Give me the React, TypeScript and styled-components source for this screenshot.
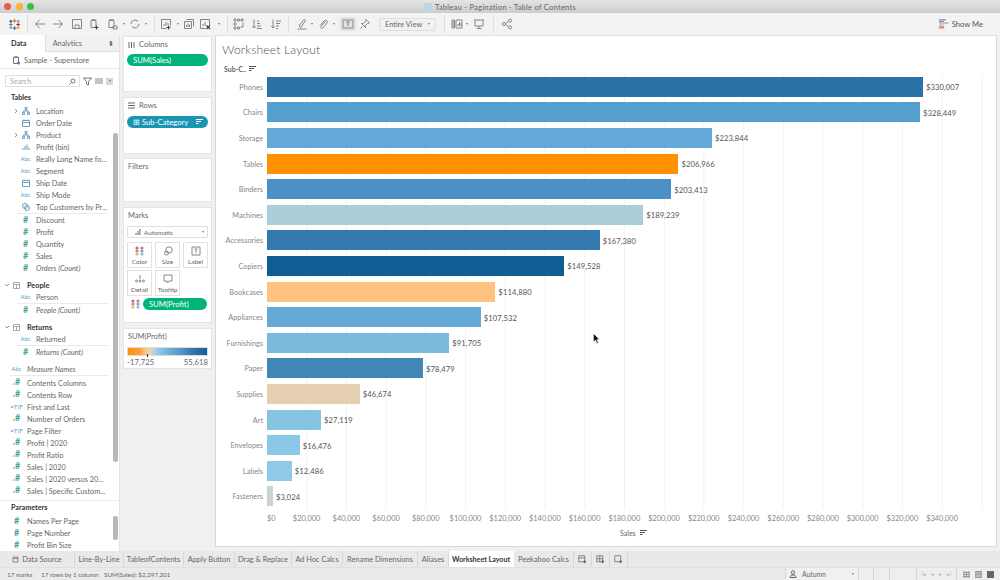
import React from "react";
import styled, { createGlobalStyle } from "styled-components";

const Global = createGlobalStyle`
  html, body { margin: 0; padding: 0; background: #f0f0f0; overflow: hidden; }
  * { box-sizing: border-box; }
  body { font-family: Lato, "Open Sans", "Liberation Sans", sans-serif; }
`;

const Page = styled.div`
  width: 1000px; height: 580px; position: relative; overflow: hidden;
  display: flex; flex-direction: column; background: #f0f0f0; color: #555;
`;

/* ---------- title bar ---------- */
const TitleBar = styled.div`
  height: 13px; flex: none; display: flex; align-items: center; justify-content: center; gap: 3px;
  background: linear-gradient(#e4e4e4, #cdcdcd); position: relative;
  font-size: 7.6px; letter-spacing: .22px; color: #666;
`;
const Lights = styled.div`
  position: absolute; left: 4px; top: 3px; display: flex; gap: 4.6px;
`;
const Light = styled.i<{ $c: string }>`
  width: 7px; height: 7px; border-radius: 50%; background: ${p => p.$c}; display: block;
`;
const TitleIcon = styled.span`
  width: 8px; height: 8px; display: block; background: #bcd6e8;
`;

/* ---------- toolbar ---------- */
const Toolbar = styled.div`
  height: 22px; flex: none; display: flex; align-items: center; background: #f3f3f3; padding-left: 6px;
`;
const Slot = styled.div<{ $w: number; $on?: boolean }>`
  width: ${p => p.$w}px; height: 14px; flex: none; display: flex; align-items: center; justify-content: center;
  background: ${p => (p.$on ? "#e2e2e2" : "transparent")}; color: #858585; border-radius: 1px;
`;
const TSep = styled.div`
  width: 1px; height: 18px; background: #dedede; flex: none; margin: 0 5px;
`;
const Caret = styled.i`
  width: 0; height: 0; display: block; flex: none; border-left: 1.6px solid transparent; border-right: 1.6px solid transparent;
  border-top: 2px solid #777;
`;
const ViewSelect = styled.div`
  width: 57px; height: 13px; border: 1px solid #dedede; border-radius: 2px; background: #f1f1f1; flex: none;
  display: flex; align-items: center; justify-content: space-between; font-size: 7.4px; color: #666; padding: 0 5px;
`;
const ShowMe = styled.div`
  margin-left: auto; margin-right: 17px; display: flex; align-items: center; gap: 3px; font-size: 7.6px; color: #555;
`;

/* ---------- main ---------- */
const Main = styled.div`
  height: 516px; flex: none; display: flex;
`;
const Sidebar = styled.div`
  width: 120px; flex: none; background: #fff; border-right: 1px solid #e2e2e2; position: relative;
  display: flex; flex-direction: column; overflow: hidden;
`;
const TabsRow = styled.div`
  height: 17px; display: flex; flex: none; font-size: 7.3px;
`;
const SideTab = styled.div<{ $on?: boolean }>`
  height: 17px; width: ${p => (p.$on ? 45 : 75)}px; display: flex; align-items: center; justify-content: space-between;
  padding: 0 5px 0 ${p => (p.$on ? 11 : 7)}px; background: ${p => (p.$on ? "#fff" : "#f1f1f1")};
  border-bottom: ${p => (p.$on ? "0" : "1px solid #dedede")};
  border-left: ${p => (p.$on ? "0" : "1px solid #dedede")};
  font-weight: ${p => (p.$on ? 700 : 400)}; color: ${p => (p.$on ? "#333" : "#666")};
`;
const Source = styled.div`
  height: 17px; flex: none; display: flex; align-items: center; gap: 3px; padding-left: 12px; font-size: 7.4px; color: #666;
  border-bottom: 1px solid #e8e8e8;
`;
const SearchRow = styled.div`
  height: 22px; flex: none; display: flex; align-items: center; padding: 2px 4px 0 5px; gap: 3px;
`;
const SearchBox = styled.div`
  width: 75px; height: 12px; border: 1px solid #e0e0e0; display: flex; align-items: center; justify-content: space-between;
  padding: 0 3px 0 4px; font-size: 7.2px; color: #aaa;
`;
const MiniDrop = styled.div`
  width: 7px; height: 7px; background: #d8d8d8; display: flex; align-items: center; justify-content: center;
`;
const Heading = styled.div<{ $h: number }>`
  height: ${p => p.$h}px; flex: none; font-size: 7.2px; font-weight: 700; color: #333; padding-left: 11px;
  display: flex; align-items: center;
`;
const List = styled.div<{ $h: number }>`
  height: ${p => p.$h}px; flex: none; overflow: hidden; padding-top: 1px;
`;
const Row = styled.div<{ $lvl: number; $gap?: number }>`
  height: 12px; display: flex; align-items: center; padding-left: ${p => (p.$lvl ? 11 : 2)}px;
  margin-top: ${p => p.$gap || 0}px; white-space: nowrap;
`;
const CaretSlot = styled.div`
  width: 9px; flex: none; display: flex; justify-content: center; color: #999;
`;
const TypeSlot = styled.div<{ $c?: string; $fs?: number }>`
  width: 11px; flex: none; display: flex; justify-content: center; align-items: center; margin-right: 5px;
  color: ${p => p.$c || "#666"}; font-size: ${p => p.$fs || 7}px; line-height: 12px;
`;
const Name = styled.span<{ $i?: boolean; $b?: boolean }>`
  font-size: 7.3px; color: ${p => (p.$b ? "#333" : "#666")}; font-style: ${p => (p.$i ? "italic" : "normal")};
  font-weight: ${p => (p.$b ? 700 : 400)};
`;
const Sep = styled.div<{ $lvl: number; $after?: number }>`
  height: 1px; background: #eaeaea; margin-left: ${p => (p.$lvl ? 17 : 9)}px; margin-right: 11px;
  margin-bottom: ${p => p.$after || 0}px;
`;
const Thumb = styled.div<{ $t: number; $h: number }>`
  position: absolute; left: 113px; width: 5px; top: ${p => p.$t}px; height: ${p => p.$h}px;
  background: #b9b9b9; border-radius: 2px;
`;
const Divider = styled.div`
  height: 1px; flex: none; background: #ededed;
`;
const HashMark = styled.span`
  color: #3fa58c; font-weight: 700; font-size: 9px;
`;
const EqMark = styled.small`
  font-size: 4px;
`;

/* ---------- shelves ---------- */
const Shelves = styled.div`
  width: 95px; flex: none; display: flex; flex-direction: column; padding: 1px 3px 0 3px; background: #f0f0f0;
`;
const Card = styled.div<{ $h: number; $mb?: number }>`
  height: ${p => p.$h}px; margin-bottom: ${p => p.$mb ?? 5}px; flex: none; background: #fff; border: 1px solid #e4e4e4;
  padding: 0 3px; display: flex; flex-direction: column;
`;
const CardTitle = styled.div`
  height: 15px; flex: none; display: flex; align-items: center; gap: 4px; font-size: 7.5px; color: #666; padding-left: 1px;
`;
const Pill = styled.div<{ $c: string; $mt?: number }>`
  height: 12px; border-radius: 6px; background: ${p => p.$c}; color: #fff; font-size: 7.7px; display: flex; flex: none;
  align-items: center; justify-content: space-between; padding: 0 5px 0 6px; gap: 2px;
  margin-top: ${p => p.$mt || 0}px;
`;
const MarkDrop = styled.div`
  height: 12px; margin: 3px 0 4px 0; border: 1px solid #e0e0e0; border-radius: 1px; display: flex; align-items: center;
  justify-content: space-between; padding: 0 3px 0 7px; font-size: 6.4px; color: #666; flex: none;
`;
const MarkMode = styled.span`
  display: flex; align-items: center; gap: 3px;
`;
const MarkGrid = styled.div`
  display: grid; grid-template-columns: repeat(3, 25px); grid-auto-rows: 26px; column-gap: 3px; row-gap: 2px; flex: none;
`;
const MarkBtn = styled.div`
  border: 1px solid #e2e2e2; display: flex; flex-direction: column; align-items: center; justify-content: flex-end;
  gap: 2px; font-size: 6.5px; color: #666; padding-bottom: 2px; & > svg { color: #888; }
`;
const MarkPillRow = styled.div`
  display: flex; align-items: center; gap: 3px; margin: 2px 0 0 4px; flex: none;
  ${Pill} { width: 64px; }
`;
const Ramp = styled.div`
  height: 9px; flex: none; margin-top: 3px; position: relative;
  background: linear-gradient(90deg, #ff9010 0%, #ffa030 15%, #ffc888 23%, #dcd8c8 29%, #9ccbe4 36%, #74b4dc 50%, #4a8fc2 70%, #2a73a8 85%, #135e94 100%);
  border: 1px solid #dcdcdc;
`;
const RampTick = styled.i`
  position: absolute; left: 19px; bottom: -2px; width: 1px; height: 3px; background: #333;
`;
const RampLabels = styled.div`
  display: flex; justify-content: space-between; font-size: 7.6px; color: #666; margin-top: 1px; letter-spacing: .1px;
`;

/* ---------- viz ---------- */
const Viz = styled.div`
  width: 782px; height: 512px; flex: none; background: #fff; border: 1px solid #d9d9d9; border-top: 1px solid #e0e0e0;
  display: flex; flex-direction: column; overflow: hidden;
`;
const VizTitle = styled.div`
  height: 26px; flex: none; padding: 1px 0 0 6px; font-size: 12.2px; font-weight: 300; color: #555; letter-spacing: .12px;
  display: flex; align-items: center;
`;
const SubHead = styled.div`
  height: 12px; flex: none; padding: 1px 0 0 8px; font-size: 7px; font-weight: 700; color: #666; display: flex; align-items: center; gap: 3px;
`;
const ChartBody = styled.div`
  width: 767px; height: 435px; flex: none; display: flex; flex-direction: column; position: relative;
`;
const GridLines = styled.div`
  position: absolute; left: 51px; top: 0; width: 716px; height: 100%;
  background-image: linear-gradient(90deg, #f2f2f2 1px, transparent 1px);
  background-size: 39.72px 100%;
  background-position: -0.5px 0;
`;
const BarRow = styled.div`
  height: 25.6px; flex: none; display: flex; align-items: center; position: relative;
`;
const BarLabel = styled.div`
  width: 47px; margin-right: 4px; padding-top: 1px; flex: none; text-align: right; font-size: 7.3px; color: #888; white-space: nowrap;
`;
const Bar = styled.div<{ $c: string }>`
  height: 20px; background: ${p => p.$c}; flex: none;
`;
const BarValue = styled.div`
  margin-left: 3px; padding-top: 1px; font-size: 7.6px; color: #555; letter-spacing: .1px;
`;
const Axis = styled.div`
  height: 18px; flex: none; display: flex; padding-left: 31px; align-items: center;
`;
const Tick = styled.div<{ $first?: boolean }>`
  width: 39.72px; flex: none; text-align: center; font-size: 7.4px; color: #888; white-space: nowrap;
  padding-left: ${p => (p.$first ? 9 : 0)}px;
`;
const AxisTitle = styled.div`
  height: 11px; flex: none; display: flex; align-items: center; gap: 4px; padding-left: 404px; font-size: 7px; color: #666;
`;

/* ---------- bottom ---------- */
const TabBar = styled.div`
  height: 17px; flex: none; display: flex; background: #e9e9e9; border-bottom: 1px solid #e0e0e0;
`;
const Tab = styled.div<{ $w: number; $on?: boolean }>`
  width: ${p => p.$w}px; flex: none; display: flex; align-items: center; justify-content: center; gap: 3px;
  font-size: ${p => (p.$on ? 7.1 : 7.4)}px; white-space: nowrap; color: ${p => (p.$on ? "#333" : "#666")};
  font-weight: ${p => (p.$on ? 700 : 400)};
  background: ${p => (p.$on ? "#fff" : "transparent")};
  border-right: 1px solid ${p => (p.$on ? "#fff" : "#d8d8d8")};
`;
const StatusBar = styled.div`
  height: 12px; flex: none; display: flex; align-items: center; background: #eaeaea; font-size: 6.3px; color: #666; padding-left: 7px;
`;
const StatusText = styled.span<{ $w: number }>`
  width: ${p => p.$w}px; flex: none; white-space: nowrap;
`;
const StatusRight = styled.div`
  margin-left: auto; display: flex; align-items: stretch; height: 12px;
`;
const StatusCell = styled.div<{ $w: number; $gap?: number }>`
  width: ${p => p.$w}px; flex: none; border-left: 1px solid #d8d8d8; display: flex; align-items: center; justify-content: center;
  gap: ${p => p.$gap ?? 3}px; background: #eeeeee; color: #aaa; font-size: 5px;
`;
const ViewSwatch = styled.span`
  width: 7px; height: 7px; background: #666; display: block;
`;
const User = styled.div`
  width: 73px; flex: none; border-left: 1px solid #d8d8d8; display: flex; align-items: center; gap: 5px; padding: 0 4px 0 3px;
  background: #f0f0f0; font-size: 6.8px;
  & > i:last-child { margin-left: auto; }
`;
const Cursor = styled.svg`
  position: absolute; left: 593px; top: 333px; width: 7px; height: 11px;
`;

/* ---------- icons ---------- */
const G = styled.svg<{ $s?: number; $c?: string }>`
  width: ${p => p.$s || 12}px; height: ${p => p.$s || 12}px; display: block; fill: none; stroke: currentColor; stroke-width: 1; flex: none;
  ${p => (p.$c ? `color: ${p.$c};` : "")}
`;
const Plain = styled.svg`
  display: block; flex: none;
`;
const I = (d: string, s = 12, extra?: React.ReactNode) => (
  <G $s={s} viewBox="0 0 12 12"><path d={d} />{extra}</G>
);
const Plus = <path d="M8.5 7.5v4M6.5 9.5h4" stroke="#444" strokeWidth="1.2" />;
const icons = {
  back: I("M11 6H1.5M5.5 2L1.5 6l4 4"),
  fwd: I("M1 6h9.5M6.5 2l4 4-4 4"),
  save: I("M1.5 1.5h9v9h-9zM4 10.5V7h4v3.5"),
  dbAdd: I("M3 2.5h5v7H3zM3 2.5c0-1.2 5-1.2 5 0", 12, Plus),
  db: I("M3 2.5h5v7H3zM3 2.5c0-1.2 5-1.2 5 0M7 8h4v3H7z"),
  refresh: I("M2 6a4 4 0 0 1 7-2.6M10 6a4 4 0 0 1-7 2.6"),
  chartAdd: I("M1.5 1.5h9v6M1.5 1.5v9h5M4 8V6M6 8V4M8 7V5", 12, Plus),
  dup: I("M3.5 1.5h7v7M1.5 3.5h7v7h-7zM3.5 9V7M5 9V5.5M6.5 9V6.5"),
  clear: I("M1.5 1.5h9v6M1.5 1.5v9h5M4 8V6M6 8V4", 12, <path d="M7.5 7.5l3.5 3.5M11 7.5l-3.5 3.5" stroke="#333" strokeWidth="1.1" />),
  swap: I("M1 1h2v2H1zM4.5 1h2v2h-2zM8 1h2v2H8zM1 9h2v2H1zM4.5 9h2v2h-2zM1 5h2v2H1zM10 4.5v4.5H7.5"),
  sortA: I("M3 1.5v8.5M1.2 8.2L3 10l1.8-1.8M6 10.5h5M6 8h4M6 5.5h3M6 3h2"),
  sortD: I("M3 1.5v8.5M1.2 8.2L3 10l1.8-1.8M6 3h5M6 5.5h4M6 8h3M6 10.5h2"),
  pen: I("M3 8l5-6.5 1.5 1L5 9.5zM1.5 11h9"),
  clip: I("M8.5 3L4 8.5c-1 1.4 1 2.6 2 1.4l4-5c1.4-2-1.4-3.8-2.8-2L3 7.5"),
  fit: I("M1 2h10v8H1zM4 4h4M6 4v4"),
  pin: I("M7 1.5l3.5 3.5-2 .5-2 2 0 2-4-4 2 0 2-2zM3.5 8.5L1.5 10.5"),
  cards: I("M1 2h2.5v8H1zM1 4h2.5M1 6h2.5M1 8h2.5M5 2h6v8H5zM7 8V6M8.5 8V4M10 8V5"),
  present: I("M1 2h10M2 2v6h8V2M6 8v2.5M3.5 10.5h5"),
  share: I("M4 6l4-3M4 6l4 3", 12, <><circle cx="3" cy="6" r="1.6" /><circle cx="9" cy="2.6" r="1.6" /><circle cx="9" cy="9.4" r="1.6" /></>),
};
const Logo = () => (
  <Plain width="11" height="11" viewBox="0 0 12 12" strokeWidth="1.2">
    <path d="M6 0v4M4 2h4" stroke="#e8762b" />
    <path d="M6 8v4M4 10h4" stroke="#5b6f9a" />
    <path d="M0 6h4M2 4v4" stroke="#59879b" />
    <path d="M8 6h4M10 4v4" stroke="#c72035" />
    <path d="M2 1v3M.5 2.5h3" stroke="#1f447a" />
    <path d="M10 8v3M8.500 9.500h3" stroke="#eb912b" />
    <path d="M10 1v3M8.500 2.500h3" stroke="#5fa2b5" />
    <path d="M2 8v3M.5 9.500h3" stroke="#7099a6" />
  </Plain>
);
const DotsIcon = () => (
  <Plain width="9" height="10" viewBox="0 0 9 10">
    <circle cx="2" cy="2" r="1.6" fill="#9a7a9a" /><circle cx="7" cy="2" r="1.6" fill="#c47a86" />
    <circle cx="2" cy="5" r="1.6" fill="#e87a70" /><circle cx="7" cy="5" r="1.6" fill="#7aa4d0" />
    <circle cx="2" cy="8" r="1.6" fill="#f4b45a" /><circle cx="7" cy="8" r="1.6" fill="#8cc0da" />
  </Plain>
);
const SortLines = ({ c = "#555" }: { c?: string }) => (
  <Plain width="7" height="6" viewBox="0 0 7 6" stroke={c} strokeWidth="1">
    <path d="M0 .5h7M0 2.500h5M0 4.500h2.500" />
  </Plain>
);
const ShowMeIcon = () => (
  <Plain width="10" height="10" viewBox="0 0 10 10" strokeWidth="1.1">
    <path d="M0 .8h7" stroke="#8a7aa8" /><path d="M0 2.400h5" stroke="#9a7a98" /><path d="M0 4h9.500" stroke="#7aa8c8" />
    <path d="M0 5.600h4.500" stroke="#f0c070" /><path d="M0 7.200h5.500" stroke="#e08a70" /><path d="M0 8.800h5" stroke="#d85a5a" />
  </Plain>
);
const Chev = ({ open }: { open?: boolean }) => (
  <G $s={6} viewBox="0 0 6 6">
    <path d={open ? "M1 2l2 2 2-2" : "M2 1l2 2-2 2"} />
  </G>
);
const BLUE = "#6a9fc0";
const CalIcon = () => (
  <G $s={8} $c={BLUE} viewBox="0 0 8 8"><path d="M.5 1.500h7v6h-7zM.5 3.500h7M2 .5v1.500M6 .5v1.500" /></G>
);
const Tree = () => (
  <G $s={8} $c={BLUE} viewBox="0 0 8 8"><path d="M3 .5h2v2H3zM.5 5.500h2v2h-2zM5.500 5.500h2v2h-2zM4 2.500v1.500M1.500 5.500V4h5v1.500" /></G>
);
const Bin = () => (
  <G $s={8} $c={BLUE} viewBox="0 0 8 8"><path d="M1 7V5M3 7V3M5 7V1.500M7 7V4.500" /></G>
);
const SetIcon = () => (
  <G $s={8} $c={BLUE} viewBox="0 0 8 8"><circle cx="3" cy="3" r="2.500" /><circle cx="5" cy="5" r="2.500" /></G>
);
const TableIcon = () => (
  <G $s={7} $c="#aaa" viewBox="0 0 7 7"><path d="M.5.5h6v6h-6zM.5 2.500h6M3.500 2.500v4" /></G>
);

type Kind = "hash" | "abc" | "cal" | "tree" | "bin" | "set" | "calcHash" | "calcT" | "table";
const typeIcon = (k: Kind) => {
  switch (k) {
    case "hash": return <TypeSlot><HashMark>#</HashMark></TypeSlot>;
    case "abc": return <TypeSlot $c="#5a9ac4" $fs={5.8}>Abc</TypeSlot>;
    case "cal": return <TypeSlot><CalIcon /></TypeSlot>;
    case "tree": return <TypeSlot><Tree /></TypeSlot>;
    case "bin": return <TypeSlot><Bin /></TypeSlot>;
    case "set": return <TypeSlot><SetIcon /></TypeSlot>;
    case "table": return <TypeSlot><TableIcon /></TypeSlot>;
    case "calcHash": return <TypeSlot><HashMark><EqMark>=</EqMark>#</HashMark></TypeSlot>;
    case "calcT": return <TypeSlot $c="#5a9ac4" $fs={6.4}>=T|F</TypeSlot>;
  }
};

type Item =
  | { sep: 1 | 0; after?: number }
  | { n: string; k: Kind; lvl?: number; i?: boolean; c?: "r" | "d"; gap?: number; b?: boolean };

const fields: Item[] = [
  { n: "Location", k: "tree", lvl: 1, c: "r" },
  { n: "Order Date", k: "cal", lvl: 1 },
  { n: "Product", k: "tree", lvl: 1, c: "r" },
  { n: "Profit (bin)", k: "bin", lvl: 1 },
  { n: "Really Long Name fo...", k: "abc", lvl: 1 },
  { n: "Segment", k: "abc", lvl: 1 },
  { n: "Ship Date", k: "cal", lvl: 1 },
  { n: "Ship Mode", k: "abc", lvl: 1 },
  { n: "Top Customers by Pr...", k: "set", lvl: 1 },
  { sep: 1 },
  { n: "Discount", k: "hash", lvl: 1 },
  { n: "Profit", k: "hash", lvl: 1 },
  { n: "Quantity", k: "hash", lvl: 1 },
  { n: "Sales", k: "hash", lvl: 1 },
  { n: "Orders (Count)", k: "hash", lvl: 1, i: true },
  { n: "People", k: "table", c: "d", gap: 5, b: true },
  { n: "Person", k: "abc", lvl: 1 },
  { sep: 1 },
  { n: "People (Count)", k: "hash", lvl: 1, i: true },
  { n: "Returns", k: "table", c: "d", gap: 5, b: true },
  { n: "Returned", k: "abc", lvl: 1 },
  { sep: 1 },
  { n: "Returns (Count)", k: "hash", lvl: 1, i: true },
  { n: "Measure Names", k: "abc", i: true, gap: 5 },
  { sep: 0, after: 1 },
  { n: "Contents Columns", k: "calcHash" },
  { n: "Contents Row", k: "calcHash" },
  { n: "First and Last", k: "calcT" },
  { n: "Number of Orders", k: "calcHash" },
  { n: "Page Filter", k: "calcT" },
  { n: "Profit | 2020", k: "calcHash" },
  { n: "Profit Ratio", k: "calcHash" },
  { n: "Sales | 2020", k: "calcHash" },
  { n: "Sales | 2020 versus 20...", k: "calcHash" },
  { n: "Sales | Specific Custom...", k: "calcHash" },
];
const params = ["Names Per Page", "Page Number", "Profit Bin Size"];

const bars: [string, number, string][] = [
  ["Phones", 330007, "#2a73a8"],
  ["Chairs", 328449, "#559fcf"],
  ["Storage", 223844, "#62a9d7"],
  ["Tables", 206966, "#ff9000"],
  ["Binders", 203413, "#4b91c6"],
  ["Machines", 189239, "#abced9"],
  ["Accessories", 167380, "#3379ae"],
  ["Copiers", 149528, "#125d93"],
  ["Bookcases", 114880, "#ffc280"],
  ["Appliances", 107532, "#65a9d7"],
  ["Furnishings", 91705, "#7bb9dd"],
  ["Paper", 78479, "#4286b8"],
  ["Supplies", 46674, "#e4d0b0"],
  ["Art", 27119, "#85c4e3"],
  ["Envelopes", 16476, "#8cc8e6"],
  ["Labels", 12486, "#8fcbe8"],
  ["Fasteners", 3024, "#c9d3d3"],
];
const SCALE = 656 / 330007;

const tabs: [string, number][] = [
  ["Line-By-Line", 49], ["TableofContents", 60], ["Apply Button", 51], ["Drag & Replace", 57], ["Ad Hoc Calcs", 51],
  ["Rename Dimensions", 75], ["Aliases", 31],
];

export default function App() {
  return (
    <Page>
      <Global />
      <TitleBar>
        <Lights>
          <Light $c="#f0584f" /><Light $c="#f5b52e" /><Light $c="#2fc341" />
        </Lights>
        <TitleIcon />
        Tableau - Pagination - Table of Contents
      </TitleBar>

      <Toolbar>
        <Slot $w={16}><Logo /></Slot>
        <TSep />
        <Slot $w={14}>{icons.back}</Slot>
        <Slot $w={22}>{icons.fwd}</Slot>
        <Slot $w={16}>{icons.save}</Slot>
        <Slot $w={18}>{icons.dbAdd}</Slot>
        <Slot $w={18}>{icons.db}</Slot>
        <Slot $w={6}><Caret /></Slot>
        <Slot $w={16}>{icons.refresh}</Slot>
        <Slot $w={6}><Caret /></Slot>
        <TSep />
        <Slot $w={12}>{icons.chartAdd}</Slot>
        <Slot $w={12}><Caret /></Slot>
        <Slot $w={10}>{icons.dup}</Slot>
        <Slot $w={22}>{icons.clear}</Slot>
        <Slot $w={6}><Caret /></Slot>
        <TSep />
        <Slot $w={12}>{icons.swap}</Slot>
        <Slot $w={24}>{icons.sortA}</Slot>
        <Slot $w={14}>{icons.sortD}</Slot>
        <TSep />
        <Slot $w={16}>{icons.pen}</Slot>
        <Slot $w={4}><Caret /></Slot>
        <Slot $w={18}>{icons.clip}</Slot>
        <Slot $w={4}><Caret /></Slot>
        <Slot $w={4} />
        <Slot $w={16} $on>{icons.fit}</Slot>
        <Slot $w={18}>{icons.pin}</Slot>
        <Slot $w={5} />
        <ViewSelect>Entire View<Caret /></ViewSelect>
        <Slot $w={3} />
        <TSep />
        <Slot $w={14}>{icons.cards}</Slot>
        <Slot $w={6}><Caret /></Slot>
        <Slot $w={18}>{icons.present}</Slot>
        <TSep />
        <Slot $w={16}>{icons.share}</Slot>
        <ShowMe><ShowMeIcon />Show Me</ShowMe>
      </Toolbar>

      <Main>
        <Sidebar>
          <TabsRow>
            <SideTab $on>Data</SideTab>
            <SideTab>Analytics<span>⬍</span></SideTab>
          </TabsRow>
          <Source>
            <G $s={9} $c="#777" viewBox="0 0 9 9"><path d="M1.500 1.500h5v6h-5zM1.500 1.500c0-1 5-1 5 0" /><circle cx="6.500" cy="7" r="1.500" fill="#3f7fb5" stroke="none" /></G>
            Sample - Superstore
          </Source>
          <SearchRow>
            <SearchBox>Search<G $s={7} $c="#777" viewBox="0 0 7 7"><circle cx="4" cy="3" r="2" /><path d="M2.500 4.500L.5 6.500" /></G></SearchBox>
            <G $s={9} $c="#777" viewBox="0 0 9 9"><path d="M.5 1h8L5.500 4.500v3.500l-2-1V4.500z" /></G>
            <G $s={8} $c="#888" viewBox="0 0 8 8"><path d="M1 1v6M3 1v6M5 1v6M7 1v6" /></G>
            <MiniDrop><Caret /></MiniDrop>
          </SearchRow>
          <Heading $h={13}>Tables</Heading>
          <List $h={396}>
            {fields.map((f, idx) =>
              "sep" in f ? (
                <Sep key={idx} $lvl={f.sep} $after={f.after} />
              ) : (
                <Row key={idx} $lvl={f.lvl || 0} $gap={f.gap}>
                  <CaretSlot>{f.c && <Chev open={f.c === "d"} />}</CaretSlot>
                  {typeIcon(f.k)}
                  <Name $i={f.i} $b={f.b}>{f.n}</Name>
                </Row>
              )
            )}
          </List>
          <Divider />
          <Heading $h={13}>Parameters</Heading>
          <List $h={37}>
            {params.map(p => (
              <Row key={p} $lvl={0}>
                <CaretSlot />
                <TypeSlot><HashMark>#</HashMark></TypeSlot>
                <Name>{p}</Name>
              </Row>
            ))}
          </List>
          <Thumb $t={98} $h={329} />
          <Thumb $t={481} $h={24} />
        </Sidebar>

        <Shelves>
          <Card $h={56}>
            <CardTitle>
              <G $s={7} viewBox="0 0 7 7"><path d="M1 1v6M3.500 1v6M6 1v6" /></G>Columns
            </CardTitle>
            <Pill $c="#00b47c" $mt={2}>SUM(Sales)</Pill>
          </Card>
          <Card $h={57} $mb={4}>
            <CardTitle>
              <G $s={7} viewBox="0 0 7 7"><path d="M0 1h7M0 3.500h7M0 6h7" /></G>Rows
            </CardTitle>
            <Pill $c="#1c95b5" $mt={3}>
              <span>⊞ Sub-Category</span><SortLines c="#fff" />
            </Pill>
          </Card>
          <Card $h={44}>
            <CardTitle>Filters</CardTitle>
          </Card>
          <Card $h={116}>
            <CardTitle>Marks</CardTitle>
            <MarkDrop>
              <MarkMode>
                <G $s={6} viewBox="0 0 6 6"><path d="M1 6V4M3 6V2M5 6V0" /></G>Automatic
              </MarkMode>
              <Caret />
            </MarkDrop>
            <MarkGrid>
              <MarkBtn><DotsIcon />Color</MarkBtn>
              <MarkBtn>
                <G $s={10} viewBox="0 0 10 10"><circle cx="6" cy="4" r="3.200" /><circle cx="3.500" cy="7" r="2" /></G>Size
              </MarkBtn>
              <MarkBtn>
                <G $s={10} viewBox="0 0 10 10"><path d="M1 1h8v8H1zM3.500 3h3M5 3v4" /></G>Label
              </MarkBtn>
              <MarkBtn>
                <G $s={10} viewBox="0 0 10 10"><path d="M5 1v4" /><circle cx="1.500" cy="7" r="1" /><circle cx="5" cy="7" r="1" /><circle cx="8.500" cy="7" r="1" /></G>Detail
              </MarkBtn>
              <MarkBtn>
                <G $s={10} viewBox="0 0 10 10"><path d="M1 1h8v6H6L4.500 9 4 7H1z" /></G>Tooltip
              </MarkBtn>
            </MarkGrid>
            <MarkPillRow><DotsIcon /><Pill $c="#00b47c">SUM(Profit)</Pill></MarkPillRow>
          </Card>
          <Card $h={41}>
            <CardTitle>SUM(Profit)</CardTitle>
            <Ramp><RampTick /></Ramp>
            <RampLabels><span>-17,725</span><span>55,618</span></RampLabels>
          </Card>
        </Shelves>

        <Viz>
          <VizTitle>Worksheet Layout</VizTitle>
          <SubHead>Sub-C.. <SortLines /></SubHead>
          <ChartBody>
            <GridLines />
            {bars.map(([n, v, c]) => (
              <BarRow key={n}>
                <BarLabel>{n}</BarLabel>
                <Bar $c={c} style={{ width: v * SCALE }} />
                <BarValue>${v.toLocaleString("en-US")}</BarValue>
              </BarRow>
            ))}
          </ChartBody>
          <Axis>
            {Array.from({ length: 18 }, (_, i) => (
              <Tick key={i} $first={i === 0}>${(i * 20000).toLocaleString("en-US")}</Tick>
            ))}
          </Axis>
          <AxisTitle>Sales <SortLines /></AxisTitle>
        </Viz>
      </Main>

      <TabBar>
        <Tab $w={75}>
          <G $s={7} $c="#888" viewBox="0 0 7 7"><path d="M1 1h5v5H1zM1 2.500h5" /></G>Data Source
        </Tab>
        {tabs.map(([t, w]) => <Tab key={t} $w={w}>{t}</Tab>)}
        <Tab $w={65} $on>Worksheet Layout</Tab>
        <Tab $w={60}>Peekaboo Calcs</Tab>
        <Tab $w={18}><G $s={9} viewBox="0 0 12 12"><path d="M1 1h8v8H1zM1 4h8" /><path d="M9 7v4M7 9h4" stroke="#444" /></G></Tab>
        <Tab $w={18}><G $s={9} viewBox="0 0 12 12"><path d="M1 1h8v8H1zM5 1v8M1 5h8" /><path d="M9 7v4M7 9h4" stroke="#444" /></G></Tab>
        <Tab $w={18}><G $s={9} viewBox="0 0 12 12"><path d="M1 1h8v8H1z" /><path d="M9 7v4M7 9h4" stroke="#444" /></G></Tab>
      </TabBar>
      <StatusBar>
        <StatusText $w={34}>17 marks</StatusText>
        <StatusText $w={63}>17 rows by 1 column</StatusText>
        <StatusText $w={100}>SUM(Sales): $2,297,201</StatusText>
        <StatusRight>
          <User>
            <G $s={8} viewBox="0 0 8 8"><circle cx="4" cy="2.500" r="1.700" /><path d="M1 7.500h6c0-2-1.500-2.500-3-2.500s-3 .5-3 2.500z" /></G>
            Autumn
            <Caret />
          </User>
          <StatusCell $w={15} />
          <StatusCell $w={16} />
          <StatusCell $w={27} />
          <StatusCell $w={40} $gap={5}>
            <span>|◂</span><span>◂</span><span>▸</span><span>▸|</span>
          </StatusCell>
          <StatusCell $w={44} $gap={5}>
            <G $s={7} $c="#999" viewBox="0 0 7 7"><path d="M1 0v7M3.500 0v7M6 0v7M0 1.500h7M0 3.500h7M0 5.500h7" /></G>
            <G $s={7} $c="#999" viewBox="0 0 7 7"><path d="M0 .5h7v6H0zM0 3h7" fill="#bbb" /></G>
            <ViewSwatch />
          </StatusCell>
        </StatusRight>
      </StatusBar>

      <Cursor viewBox="0 0 7 11"><path d="M.5.500v8.500l2-2 1.500 3.500 1.300-.6L3.800 6.500H6.500z" fill="#111" stroke="#fff" strokeWidth=".5" /></Cursor>
    </Page>
  );
}
